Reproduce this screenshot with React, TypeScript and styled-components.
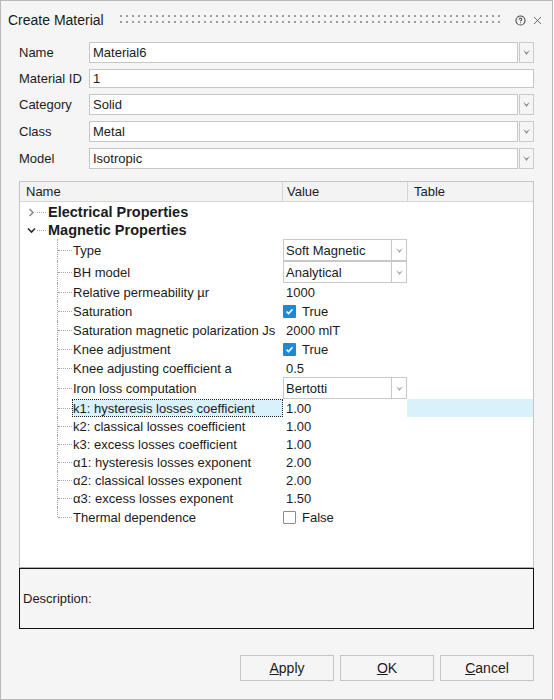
import React from "react";
import styled, { createGlobalStyle } from "styled-components";
import { CircleHelp, X } from "lucide-react";

const GlobalStyle = createGlobalStyle`
  html, body {
    margin: 0;
    padding: 0;
    background: #ffffff;
  }
  * {
    box-sizing: border-box;
  }
`;

type RowKind = "group" | "text" | "check" | "combo";

type PropRow = {
  kind: RowKind;
  name: string;
  value?: string;
  checked?: boolean;
  expanded?: boolean;
  selected?: boolean;
  last?: boolean;
};

const formFields: { label: string; value: string; combo: boolean }[] = [
  { label: "Name", value: "Material6", combo: true },
  { label: "Material ID", value: "1", combo: false },
  { label: "Category", value: "Solid", combo: true },
  { label: "Class", value: "Metal", combo: true },
  { label: "Model", value: "Isotropic", combo: true },
];

const rows: PropRow[] = [
  { kind: "group", name: "Electrical Properties", expanded: false },
  { kind: "group", name: "Magnetic Properties", expanded: true },
  { kind: "combo", name: "Type", value: "Soft Magnetic" },
  { kind: "combo", name: "BH model", value: "Analytical" },
  { kind: "text", name: "Relative permeability \u00b5r", value: "1000" },
  { kind: "check", name: "Saturation", value: "True", checked: true },
  { kind: "text", name: "Saturation magnetic polarization Js", value: "2000 mlT" },
  { kind: "check", name: "Knee adjustment", value: "True", checked: true },
  { kind: "text", name: "Knee adjusting coefficient a", value: "0.5" },
  { kind: "combo", name: "Iron loss computation", value: "Bertotti" },
  { kind: "text", name: "k1: hysteresis losses coefficient", value: "1.00", selected: true },
  { kind: "text", name: "k2: classical losses coefficient", value: "1.00" },
  { kind: "text", name: "k3: excess losses coefficient", value: "1.00" },
  { kind: "text", name: "\u03b11: hysteresis losses exponent", value: "2.00" },
  { kind: "text", name: "\u03b12: classical losses exponent", value: "2.00" },
  { kind: "text", name: "\u03b13: excess losses exponent", value: "1.50" },
  { kind: "check", name: "Thermal dependence", value: "False", checked: false, last: true },
];

const rowHeights: Record<RowKind, number> = {
  group: 18,
  text: 18,
  check: 20,
  combo: 22,
};

function DropArrow({ color }: { color: string }) {
  return (
    <svg width="7" height="5" viewBox="0 0 7 5">
      <polygon points="0,0 3.5,2.4 7,0 3.5,5" fill={color} />
    </svg>
  );
}

function Chevron({ open }: { open: boolean }) {
  return open ? (
    <svg width="9" height="9" viewBox="0 0 9 9">
      <path d="M1 2.5 L4.5 6 L8 2.5" fill="none" stroke="#2a2a2a" strokeWidth="1.6" />
    </svg>
  ) : (
    <svg width="9" height="9" viewBox="0 0 9 9">
      <path d="M2.5 1 L6 4.5 L2.5 8" fill="none" stroke="#8c8c8c" strokeWidth="1.6" />
    </svg>
  );
}

function CheckMark() {
  return (
    <svg width="9" height="9" viewBox="0 0 9 9">
      <path d="M1.5 4.6 L3.6 6.6 L7.6 2.2" fill="none" stroke="#ffffff" strokeWidth="1.6" />
    </svg>
  );
}

export default function App() {
  return (
    <>
      <GlobalStyle />
      <Window>
        <TitleBar>
          <Title>Create Material</Title>
          <Grip />
          <TitleIcons>
            <CircleHelp size={11} strokeWidth={2.2} color="#444" />
            <X size={13} strokeWidth={1.4} color="#444" />
          </TitleIcons>
        </TitleBar>

        <Form>
          {formFields.map((f) => (
            <FieldRow key={f.label}>
              <FieldLabel>{f.label}</FieldLabel>
              <FieldControl>
                <InputBox $combo={f.combo}>{f.value}</InputBox>
                {f.combo && (
                  <DropButton>
                    <DropArrow color="#8a8a8a" />
                  </DropButton>
                )}
              </FieldControl>
            </FieldRow>
          ))}
        </Form>

        <PropertyGrid>
          <GridHeader>
            <HeaderCell $width={263} $pad={6}>Name</HeaderCell>
            <HeaderCell $width={125} $pad={4}>Value</HeaderCell>
            <HeaderCell $pad={6} $last>Table</HeaderCell>
          </GridHeader>
          <GridBody>
            {rows.map((r) => (
              <GridRow key={r.name} $height={rowHeights[r.kind]}>
                <NameCell>
                  {r.kind === "group" ? (
                    <>
                      <Expander>
                        <Chevron open={!!r.expanded} />
                      </Expander>
                      <HLine $width={9} />
                      <GroupName>{r.name}</GroupName>
                    </>
                  ) : (
                    <>
                      <Indent />
                      <Branch $last={r.last} />
                      <ChildName $selected={r.selected}>{r.name}</ChildName>
                    </>
                  )}
                </NameCell>
                <ValueCell>
                  {r.kind === "combo" && (
                    <ValueCombo>
                      <ComboText>{r.value}</ComboText>
                      <ComboDrop>
                        <DropArrow color="#a8a8a8" />
                      </ComboDrop>
                    </ValueCombo>
                  )}
                  {r.kind === "text" && <ValueText>{r.value}</ValueText>}
                  {r.kind === "check" && (
                    <CheckWrap>
                      <CheckBox $checked={!!r.checked}>{r.checked && <CheckMark />}</CheckBox>
                      <CheckLabel>{r.value}</CheckLabel>
                    </CheckWrap>
                  )}
                </ValueCell>
                <TableCell $selected={r.selected} />
              </GridRow>
            ))}
          </GridBody>
        </PropertyGrid>

        <DescriptionBox>Description:</DescriptionBox>

        <Footer>
          <DialogButton>
            <u>A</u>pply
          </DialogButton>
          <DialogButton>
            <u>O</u>K
          </DialogButton>
          <DialogButton>
            <u>C</u>ancel
          </DialogButton>
        </Footer>
      </Window>
    </>
  );
}

const Window = styled.div`
  width: 553px;
  height: 700px;
  border: 1px solid #b8b8b8;
  background: #f5f5f5;
  display: flex;
  flex-direction: column;
  font-family: "Liberation Sans", Arial, sans-serif;
  font-size: 13px;
  color: #1b1b1b;
`;

const TitleBar = styled.div`
  height: 38px;
  display: flex;
  align-items: center;
  padding: 0 8px 0 7px;
  flex: none;
`;

const Title = styled.div`
  font-size: 14px;
  color: #1a1a1a;
  white-space: nowrap;
`;

const Grip = styled.div`
  flex: 1;
  height: 12px;
  margin: 0 14px 2px 14px;
  background-image: radial-gradient(circle, #9c9c9c 0.9px, transparent 1.2px);
  background-size: 6px 6px;
`;

const TitleIcons = styled.div`
  display: flex;
  align-items: center;
  gap: 5px;
`;

const Form = styled.div`
  display: flex;
  flex-direction: column;
  gap: 6px;
  padding: 3px 18px 0 18px;
`;

const FieldRow = styled.div`
  display: grid;
  grid-template-columns: 70px 1fr;
  align-items: center;
`;

const FieldLabel = styled.div`
  white-space: nowrap;
`;

const FieldControl = styled.div`
  display: flex;
`;

const InputBox = styled.div<{ $combo: boolean }>`
  flex: 1;
  height: ${(p) => (p.$combo ? 21 : 19)}px;
  background: #ffffff;
  border: 1px solid #c6c6c6;
  padding-left: 3px;
  display: flex;
  align-items: center;
`;

const DropButton = styled.div`
  width: 15px;
  height: 21px;
  margin-left: 1px;
  border: 1px solid #cacaca;
  background: #f5f5f5;
  display: flex;
  align-items: center;
  justify-content: center;
`;

const PropertyGrid = styled.div`
  margin: 12px 18px 0 18px;
  height: 387px;
  border: 1px solid #c4c4c4;
  border-bottom-color: #b0b0b0;
  background: #ffffff;
  display: flex;
  flex-direction: column;
  flex: none;
`;

const GridHeader = styled.div`
  height: 20px;
  display: flex;
  background: #f3f3f3;
  border-bottom: 1px solid #d6d6d6;
  flex: none;
`;

const HeaderCell = styled.div<{ $width?: number; $pad: number; $last?: boolean }>`
  ${(p) => (p.$width ? `width: ${p.$width}px; flex: none;` : "flex: 1;")}
  padding-left: ${(p) => p.$pad}px;
  border-right: ${(p) => (p.$last ? "none" : "1px solid #d4d4d4")};
  display: flex;
  align-items: center;
`;

const GridBody = styled.div`
  padding-top: 1px;
  display: flex;
  flex-direction: column;
`;

const GridRow = styled.div<{ $height: number }>`
  height: ${(p) => p.$height}px;
  display: flex;
`;

const NameCell = styled.div`
  width: 263px;
  flex: none;
  display: flex;
  align-items: stretch;
`;

const Expander = styled.div`
  width: 10px;
  margin-left: 6px;
  margin-right: 1px;
  display: flex;
  align-items: center;
  justify-content: center;
`;

const HLine = styled.div<{ $width: number }>`
  width: ${(p) => p.$width}px;
  align-self: center;
  border-top: 1px dotted #a6a6a6;
`;

const GroupName = styled.div`
  margin-left: 2px;
  font-weight: bold;
  font-size: 14.5px;
  display: flex;
  align-items: center;
  white-space: nowrap;
`;

const Indent = styled.div`
  width: 37px;
  flex: none;
`;

const Branch = styled.div<{ $last?: boolean }>`
  width: 15px;
  flex: none;
  position: relative;
  &::before {
    content: "";
    position: absolute;
    left: 0;
    top: 0;
    height: ${(p) => (p.$last ? "50%" : "100%")};
    border-left: 1px dotted #a6a6a6;
  }
  &::after {
    content: "";
    position: absolute;
    left: 1px;
    right: 0;
    top: 50%;
    border-top: 1px dotted #a6a6a6;
  }
`;

const ChildName = styled.div<{ $selected?: boolean }>`
  flex: 1;
  min-width: 0;
  display: flex;
  align-items: center;
  padding-left: 1px;
  white-space: nowrap;
  overflow: hidden;
  background: ${(p) => (p.$selected ? "#d9f1fb" : "transparent")};
  outline: ${(p) => (p.$selected ? "1px dotted #222" : "none")};
  outline-offset: -1px;
`;

const ValueCell = styled.div`
  width: 124px;
  flex: none;
  display: flex;
  align-items: center;
`;

const ValueText = styled.div`
  padding-left: 3px;
  white-space: nowrap;
`;

const ValueCombo = styled.div`
  width: 124px;
  height: 22px;
  border: 1px solid #c8c8c8;
  display: flex;
  background: #ffffff;
`;

const ComboText = styled.div`
  flex: 1;
  padding-left: 2px;
  display: flex;
  align-items: center;
  white-space: nowrap;
`;

const ComboDrop = styled.div`
  width: 15px;
  border-left: 1px solid #c8c8c8;
  display: flex;
  align-items: center;
  justify-content: center;
`;

const CheckWrap = styled.div`
  display: flex;
  align-items: center;
`;

const CheckBox = styled.div<{ $checked: boolean }>`
  width: 13px;
  height: 13px;
  border-radius: 1px;
  background: ${(p) => (p.$checked ? "#1a8ad6" : "#ffffff")};
  border: ${(p) => (p.$checked ? "none" : "1px solid #8c8c8c")};
  display: flex;
  align-items: center;
  justify-content: center;
`;

const CheckLabel = styled.div`
  margin-left: 6px;
`;

const TableCell = styled.div<{ $selected?: boolean }>`
  flex: 1;
  background: ${(p) => (p.$selected ? "#d9f1fb" : "transparent")};
`;

const DescriptionBox = styled.div`
  margin: 0 18px;
  height: 61px;
  border: 1px solid #111111;
  background: #f5f5f5;
  padding-left: 3px;
  display: flex;
  align-items: center;
  flex: none;
`;

const Footer = styled.div`
  margin-top: auto;
  padding: 0 18px 18px 0;
  display: flex;
  justify-content: flex-end;
  gap: 6px;
`;

const DialogButton = styled.button`
  width: 94px;
  height: 26px;
  border: 1px solid #c4c4c4;
  background: #f5f5f5;
  font-family: "Liberation Sans", Arial, sans-serif;
  font-size: 14px;
  color: #1b1b1b;
  padding: 0;
  border-radius: 0;
`;
